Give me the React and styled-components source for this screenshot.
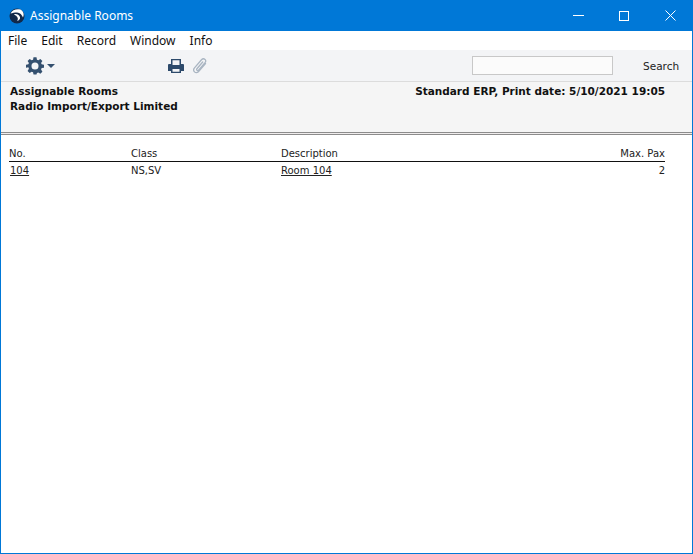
import React from "react";
import styled, { createGlobalStyle } from "styled-components";

const Global = createGlobalStyle`
  html, body { margin: 0; padding: 0; background: #fff; }
  #root { width: 693px; height: 554px; }
`;
const Win = styled.div`
  width: 693px; height: 554px; box-sizing: border-box;
  border: 1px solid #0078d7; border-top: 0;
  display: flex; flex-direction: column; background: #fff;
  font-family: "Noto Sans", sans-serif; color: #111; overflow: hidden;
`;
const TitleBar = styled.div`
  height: 31px; flex: none; background: #0078d7; color: #fff; margin: 0 -1px;
  display: flex; align-items: center; padding-left: 9px;
`;
const TitleText = styled.div`
  font-size: 12px; margin-left: 5px; flex: 1; color: #fff;
`;
const WinBtn = styled.div`
  width: 46px; height: 31px; display: flex; align-items: center; justify-content: center;
`;
const MenuBar = styled.div`
  height: 19px; flex: none; display: flex; background: #fff; padding-left: 7px; gap: 14px;
  align-items: center; font-size: 12px;
`;
const Toolbar = styled.div`
  height: 32px; flex: none; background: #f3f4f6; border-bottom: 1px solid #dcdcdc;
  display: flex; align-items: center; position: relative; box-sizing: border-box;
`;
const GearGroup = styled.div`
  margin-left: 25px; width: 30px; display: flex; align-items: center; gap: 3px;
`;
const ToolIcons = styled.div`
  margin-left: 112px; display: flex; align-items: center; gap: 9px;
`;
const SearchInput = styled.div`
  margin-left: 265px; width: 139px; height: 17px; background: #fbfbfb; border: 1px solid #c8c8c8;
`;
const SearchLabel = styled.div`
  margin-left: 30px; font-family: "DejaVu Sans", sans-serif; font-size: 10.5px; color: #222;
`;
const Header = styled.div`
  height: 50px; flex: none; background: #f5f5f5; padding: 2px 27px 0 9px; box-sizing: border-box;
  font-family: "DejaVu Sans", sans-serif; font-weight: bold; font-size: 10.5px; line-height: 15px;
  color: #111;
`;
const HeaderRow = styled.div`
  display: flex; justify-content: space-between;
`;
const Rule = styled.div`
  flex: none; height: 3px; background: #f0eded;
  border-top: 1px solid #8c8c8c; border-bottom: 1px solid #8c8c8c;
  box-sizing: border-box;
`;
const Table = styled.div`
  margin: 11px 27px 0 8px; font-family: "DejaVu Sans", sans-serif; font-size: 10px; color: #222;
`;
const Grid = styled.div`
  display: grid; grid-template-columns: 122px 150px 1fr 80px; height: 14px; align-items: center;
  ${p => p.$head && "border-bottom: 1px solid #111; height: 14px; padding-bottom: 1px;"}
  ${p => p.$head ? "" : "margin-top: 1px; padding-left: 1px; grid-template-columns: 121px 150px 1fr 80px;"}
`;
const Cell = styled.div`
  text-align: ${p => (p.$right ? "right" : "left")};
  ${p => p.$link && "text-decoration: underline;"}
`;

const Logo = () => (
  <svg width="16" height="16" viewBox="0 0 16 16">
    <circle cx="8" cy="8" r="7.5" fill="#12294a" />
    <path d="M1.5 5.5C3 1.5 8 .5 11.5 1.5 14.5 3 15.5 6.5 14 9.5 13 7 11 4.5 8 4.5 5.5 4.5 3.5 5 1.5 5.5Z" fill="#fff" />
    <path d="M5 6.5C7 5.5 10 6.5 11 9 11.5 11 10 12.5 8 13 10 11 8.5 8 5 6.5Z" fill="#fff" />
  </svg>
);
const Gear = () => (
  <svg width="18" height="18" viewBox="0 0 24 24" fill="#34506f">
    <path fillRule="evenodd" d="M10 1h4l.6 3.1 1.9.8L19.100 3.100 21.900 5.900 20.100 8.500l.8 1.900L24 11v4l-3.100.4-.8 1.900 1.800 2.800-2.800 2.800-2.600-1.800-1.900.8L14 24h-4l-.6-3.100-1.900-.8-2.600 1.800-2.800-2.800 1.800-2.800-.8-1.900L0 15v-4l3.100-.6.8-1.900L2.100 5.900 4.900 3.100 7.500 4.900l1.900-.8ZM12 8a4.700 4.700 0 1 0 0 9.400A4.700 4.700 0 0 0 12 8Z" transform="translate(0 -.6)" />
  </svg>
);
const Caret = () => (
  <svg width="8" height="4" viewBox="0 0 8 4"><path d="M0 0h8L4 4Z" fill="#34506f" /></svg>
);
const Printer = () => (
  <svg width="16" height="14" viewBox="0 0 16 14" fill="#2d4a6b">
    <path fillRule="evenodd" d="M3 0h10v5h2a1 1 0 0 1 1 1v6h-3v2H3v-2H0V6a1 1 0 0 1 1-1h2ZM4.500 1.300V6h7V1.300ZM4.500 10v2.700h7V10Z" />
  </svg>
);
const Clip = () => (
  <svg width="14" height="16" viewBox="0 0 14 16" fill="none" stroke="#a9b5c2" strokeWidth="1.300" strokeLinecap="round">
    <path d="M12.500 5.500 6 13.200C4.600 15 2.600 15 1.500 13.900.4 12.800.5 11 1.700 9.600L8.500 1.800C9.600.6 11.100.6 12 1.400c.9.900.9 2.200 0 3.300L5.800 11.900c-.6.700-1.300.8-1.800.4-.5-.5-.4-1.200.1-1.800L9.700 4" />
  </svg>
);

export default function App() {
  return (
    <>
      <Global />
      <Win>
        <TitleBar>
          <Logo />
          <TitleText>Assignable Rooms</TitleText>
          <WinBtn>
            <svg width="11" height="1"><rect width="11" height="1" fill="#fff" /></svg>
          </WinBtn>
          <WinBtn>
            <svg width="10" height="10"><rect x=".5" y=".5" width="9" height="9" fill="none" stroke="#fff" /></svg>
          </WinBtn>
          <WinBtn>
            <svg width="11" height="11"><path d="M.5.500l10 10M10.500.500l-10 10" stroke="#fff" fill="none" /></svg>
          </WinBtn>
        </TitleBar>
        <MenuBar>
          <span>File</span><span>Edit</span><span>Record</span><span>Window</span><span>Info</span>
        </MenuBar>
        <Toolbar>
          <GearGroup><Gear /><Caret /></GearGroup>
          <ToolIcons><Printer /><Clip /></ToolIcons>
          <SearchInput />
          <SearchLabel>Search</SearchLabel>
        </Toolbar>
        <Header>
          <HeaderRow><span>Assignable Rooms</span><span>Standard ERP, Print date: 5/10/2021 19:05</span></HeaderRow>
          <div>Radio Import/Export Limited</div>
        </Header>
        <Rule />
        <Table>
          <Grid $head><Cell>No.</Cell><Cell>Class</Cell><Cell>Description</Cell><Cell $right>Max. Pax</Cell></Grid>
          <Grid><Cell $link>104</Cell><Cell>NS,SV</Cell><Cell $link>Room 104</Cell><Cell $right>2</Cell></Grid>
        </Table>
      </Win>
    </>
  );
}
